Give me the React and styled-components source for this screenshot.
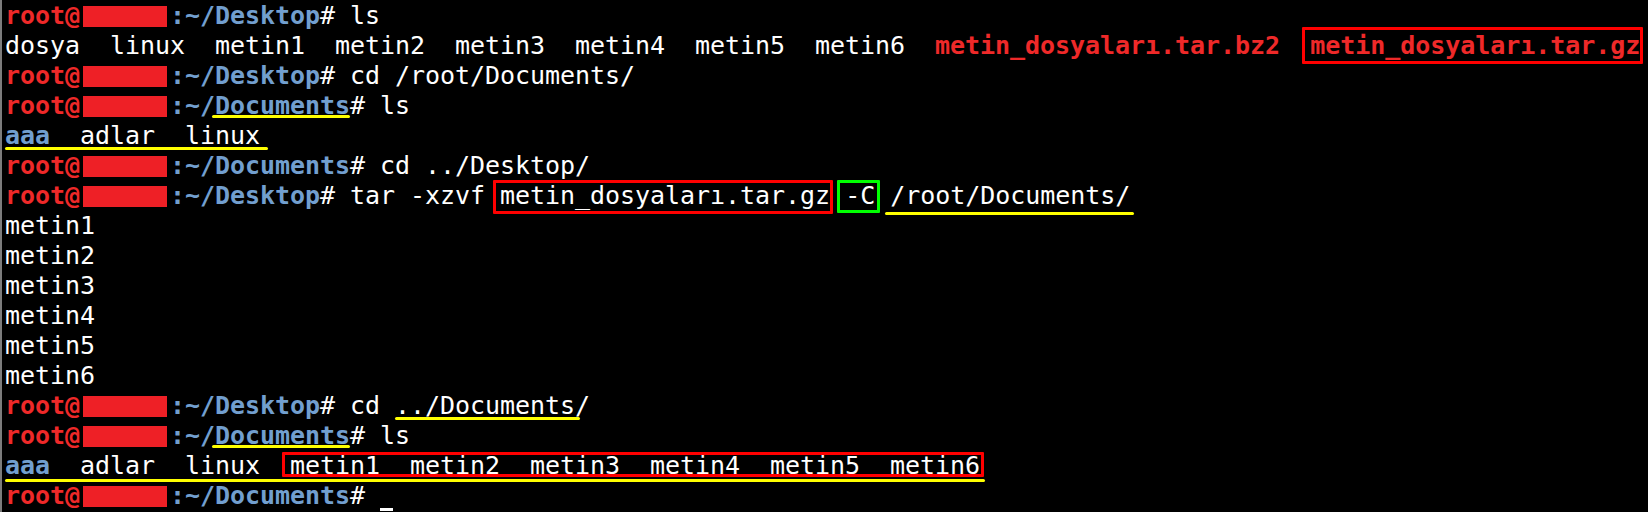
import React from "react";
import styled, { createGlobalStyle } from "styled-components";

const Global = createGlobalStyle`
  html, body { margin: 0; padding: 0; background: #000; }
  body { width: 1648px; height: 512px; overflow: hidden; }
`;

const Terminal = styled.div`
  box-sizing: border-box;
  width: 1648px;
  height: 512px;
  background: #000;
  border-left: 2px solid #7c7c7c;
  padding: 1px 0 0 3px;
  font-family: "DejaVu Sans Mono", "Liberation Mono", monospace;
  font-size: 25px;
  letter-spacing: -0.05px;
  line-height: 30px;
  color: #ffffff;
  overflow: hidden;
`;

const Line = styled.div`
  height: 30px;
  white-space: pre;
`;

const Red = styled.span`
  color: #ef2929;
  font-weight: bold;
`;

const Blue = styled.span`
  color: #729fcf;
  font-weight: bold;
`;

const Redact = styled.span`
  position: relative;
  &::after {
    content: "";
    position: absolute;
    left: 3px;
    right: 3px;
    top: 5px;
    bottom: 3px;
    background: #ee2026;
  }
`;

const Boxed = styled.span`
  position: relative;
  &::after {
    content: "";
    position: absolute;
    top: ${(p) => p.$t}px;
    bottom: ${(p) => p.$b}px;
    left: ${(p) => p.$l}px;
    right: ${(p) => p.$r}px;
    border: 3px solid ${(p) => (p.$green ? "#00ff00" : "#ff0000")};
    border-radius: 1px;
    pointer-events: none;
  }
`;

const Under = styled.span`
  position: relative;
  &::after {
    content: "";
    position: absolute;
    left: ${(p) => p.$l}px;
    right: ${(p) => p.$r}px;
    top: ${(p) => p.$t}px;
    height: 3px;
    border-radius: 2px;
    background: #ffff00;
    pointer-events: none;
  }
`;

const Cursor = styled.span`
  position: relative;
  &::after {
    content: "";
    position: absolute;
    left: 0;
    width: 13px;
    top: 27px;
    height: 3px;
    background: #ffffff;
  }
`;

const Host = () => (
  <Redact>
    <Red>{"\u00a0\u00a0\u00a0\u00a0\u00a0\u00a0"}</Red>
  </Redact>
);

const Prompt = ({ dir, underline }) => (
  <>
    <Red>root@</Red>
    <Host />
    <Blue>:~/</Blue>
    {underline ? (
      <Under $l={-3} $r={0} $t={24}>
        <Blue>{dir}</Blue>
      </Under>
    ) : (
      <Blue>{dir}</Blue>
    )}
    {"# "}
  </>
);

const outputs = ["metin1", "metin2", "metin3", "metin4", "metin5", "metin6"];

export default function App() {
  return (
    <>
      <Global />
      <Terminal>
        <Line>
          <Prompt dir="Desktop" />
          ls
        </Line>
        <Line>
          {"dosya  linux  metin1  metin2  metin3  metin4  metin5  metin6  "}
          <Red>metin_dosyaları.tar.bz2</Red>
          {"  "}
          <Boxed $t={-4} $b={-4} $l={-8} $r={-3}>
            <Red>metin_dosyaları.tar.gz</Red>
          </Boxed>
        </Line>
        <Line>
          <Prompt dir="Desktop" />
          cd /root/Documents/
        </Line>
        <Line>
          <Prompt dir="Documents" underline />
          ls
        </Line>
        <Line>
          <Under $l={0} $r={7} $t={26}>
            <Blue>aaa</Blue>
            {"  adlar  linux "}
          </Under>
        </Line>
        <Line>
          <Prompt dir="Documents" />
          cd ../Desktop/
        </Line>
        <Line>
          <Prompt dir="Desktop" />
          {"tar -xzvf "}
          <Boxed $t={-1} $b={-4} $l={-7} $r={-3}>
            metin_dosyaları.tar.gz
          </Boxed>
          {" "}
          <Boxed $green $t={-1} $b={-3} $l={-8} $r={-5}>
            -C
          </Boxed>
          {" "}
          <Under $l={-5} $r={-4} $t={31}>
            /root/Documents/
          </Under>
        </Line>
        {outputs.map((o) => (
          <Line key={o}>{o}</Line>
        ))}
        <Line>
          <Prompt dir="Desktop" />
          {"cd "}
          <Under $l={0} $r={10} $t={26}>
            ../Documents/
          </Under>
        </Line>
        <Line>
          <Prompt dir="Documents" underline />
          ls
        </Line>
        <Line>
          <Under $l={0} $r={-5} $t={28}>
            <Blue>aaa</Blue>
            {"  adlar  linux  "}
            <Boxed $t={1} $b={3} $l={-8} $r={-4}>
              {outputs.join("  ")}
            </Boxed>
          </Under>
        </Line>
        <Line>
          <Prompt dir="Documents" />
          <Cursor>{"\u00a0"}</Cursor>
        </Line>
      </Terminal>
    </>
  );
}
